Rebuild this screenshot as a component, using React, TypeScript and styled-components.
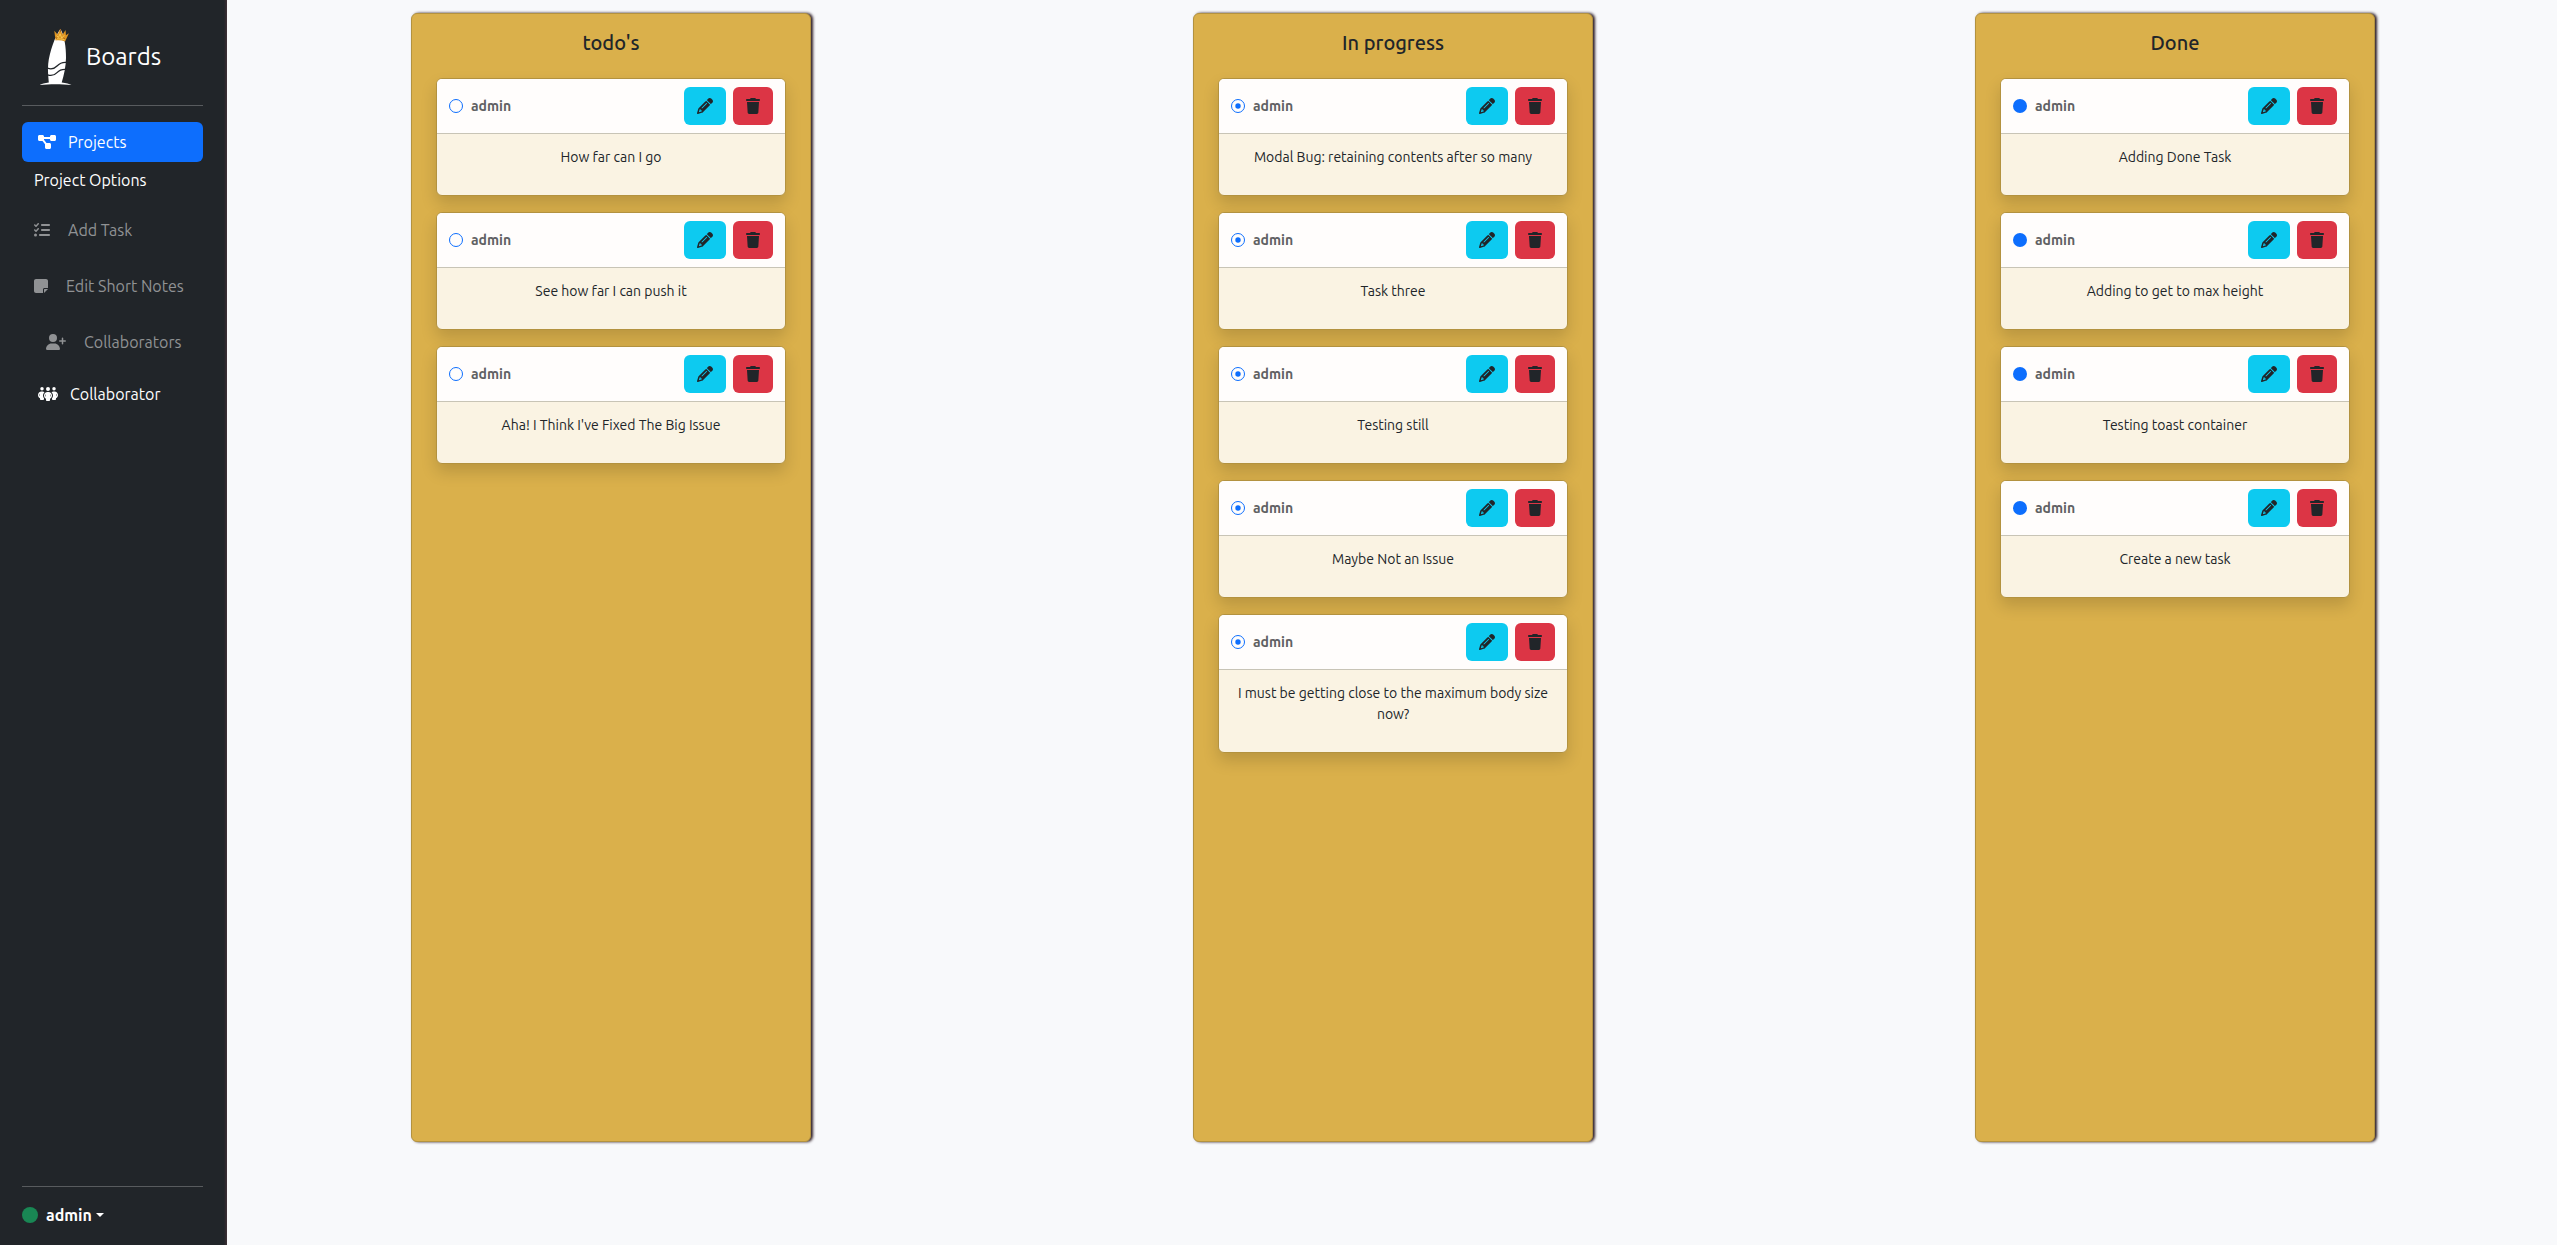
import React from "react";
import styled, { createGlobalStyle } from "styled-components";
import {
  FaDiagramProject,
  FaListCheck,
  FaNoteSticky,
  FaPencil,
  FaPeopleGroup,
  FaTrash,
  FaUserPlus,
} from "react-icons/fa6";

type Status = "todo" | "progress" | "done";

interface Column {
  title: string;
  status: Status;
  tasks: string[];
}

const columns: Column[] = [
  {
    title: "todo's",
    status: "todo",
    tasks: ["How far can I go", "See how far I can push it", "Aha! I Think I've Fixed The Big Issue"],
  },
  {
    title: "In progress",
    status: "progress",
    tasks: [
      "Modal Bug: retaining contents after so many",
      "Task three",
      "Testing still",
      "Maybe Not an Issue",
      "I must be getting close to the maximum body size now?",
    ],
  },
  {
    title: "Done",
    status: "done",
    tasks: ["Adding Done Task", "Adding to get to max height", "Testing toast container", "Create a new task"],
  },
];

const GlobalStyle = createGlobalStyle`
  *, *::before, *::after { box-sizing: border-box; }
  body {
    margin: 0;
    background: #f8f9fb;
    color: #212529;
    font-family: Ubuntu, Roboto, "Liberation Sans", sans-serif;
    font-size: 16px;
    line-height: 24px;
  }
  button { font: inherit; cursor: pointer; }
`;

const Layout = styled.div`
  display: flex;
  min-height: 100vh;
  overflow: hidden;
  background: #f8f9fb;
`;

const Sidebar = styled.aside`
  display: flex;
  flex-direction: column;
  flex: 0 0 227px;
  padding: 28px 24px 18px 22px;
  background: #212529;
  color: #fff;
  box-shadow: inset -3px 0 3px -2px #4a353b;
`;

const Brand = styled.a`
  display: flex;
  align-items: center;
  gap: 14px;
  padding-left: 17px;
  color: #fff;
  font-size: 24px;
  line-height: 36px;
  text-decoration: none;
`;

const Logo = styled.svg`
  width: 33px;
  height: 58px;
`;

const Divider = styled.hr<{ $top?: number }>`
  width: 100%;
  height: 1px;
  margin: ${(p) => p.$top ?? 0}px 0 16px;
  border: 0;
  background: #585b5e;
`;

const Nav = styled.nav`
  display: flex;
  flex: 1;
  flex-direction: column;
`;

const NavButton = styled.button<{ $active?: boolean; $indent?: number; $gap?: number; $icon: number }>`
  display: flex;
  align-items: center;
  gap: ${(p) => p.$gap ?? 18}px;
  height: 40px;
  padding: 0 0 0 ${(p) => p.$indent ?? 12}px;
  border: 0;
  border-radius: 6px;
  background: ${(p) => (p.$active ? "#0d6efd" : "transparent")};
  color: #fff;
  text-align: left;
  white-space: nowrap;

  &:disabled { color: #909294; }
  svg { flex: none; width: ${(p) => p.$icon}px; height: 16px; }
`;

const NavHeading = styled.div`
  margin: 6px 0 18px;
  padding-left: 12px;
`;

const NavGroup = styled.div`
  display: flex;
  flex-direction: column;
  gap: 16px;
  margin-bottom: 12px;
`;

const UserMenu = styled.button`
  display: flex;
  align-items: center;
  gap: 8px;
  padding: 0;
  border: 0;
  background: none;
  color: #fff;
  font-weight: 500;
`;

const Presence = styled.span`
  width: 16px;
  height: 16px;
  border-radius: 50%;
  background: #198754;
`;

const UserName = styled.span`
  display: flex;
  align-items: center;
  gap: 4px;
  font-weight: 700;

  &::after {
    content: "";
    border: 4px solid transparent;
    border-top-color: #fff;
    border-bottom: 0;
  }
`;

const Board = styled.main`
  display: grid;
  flex: 1;
  grid-template-columns: repeat(3, minmax(0, 1fr));
  justify-items: center;
  align-items: start;
  margin: 0 -9px 0 -7px;
  padding: 13px 0;
`;

const ColumnPanel = styled.section`
  width: 100%;
  max-width: 400px;
  min-height: calc(100vh - 116px);
  padding: 16px 24px;
  border: 1px solid #b3923f;
  border-radius: 6px;
  background: #dab04b;
  box-shadow: 2px 0 3px #2c1b22;
`;

const ColumnTitle = styled.h2`
  margin: 0 0 22px;
  font-size: 20px;
  font-weight: 500;
  line-height: 26px;
  text-align: center;
`;

const CardList = styled.div`
  display: flex;
  flex-direction: column;
  gap: 16px;
`;

const Card = styled.article`
  border: 1px solid #b3923f;
  border-radius: 6px;
  background: #faf3e3;
  box-shadow: 0 8px 16px rgba(0, 0, 0, 0.15);
`;

const CardHeader = styled.header`
  display: flex;
  align-items: center;
  gap: 7px;
  padding: 8px 12px;
  border-bottom: 1px solid #c8c4b6;
  border-radius: 5px 5px 0 0;
  background: #fffdfc;
`;

const Owner = styled.span`
  display: flex;
  flex: 1;
  align-items: center;
  gap: 8px;
  color: #5f6163;
  font-size: 14px;
  font-weight: 700;
  line-height: 21px;
`;

const StatusIcon = styled.svg`
  width: 14px;
  height: 14px;
  color: #0d6efd;
`;

const IconButton = styled.button<{ $tone: string; $icon: number }>`
  display: flex;
  align-items: center;
  height: 38px;
  padding: 0 13px;
  border: 0;
  border-radius: 6px;
  background: ${(p) => p.$tone};
  color: #212529;

  svg { width: ${(p) => p.$icon}px; height: 16px; }
`;

const CardText = styled.p`
  margin: 0;
  padding: 13px 12px 27px;
  font-size: 14px;
  line-height: 21px;
  text-align: center;
`;

function SurfboardLogo() {
  return (
    <Logo viewBox="0 0 33 58" aria-hidden="true">
      <path
        d="M21.500 1C16 8 10.500 24 9.200 36c-.7 7 .2 13 .6 18.400C6 54.900 2.500 55.900.500 57c10-1.100 22-1.100 32 0-2-1.100-5.500-2.100-9.800-2.600C25 47 26.800 39 27 30c.1-11-1.600-22-5.500-29z"
        fill="#fff"
      />
      <path
        d="M8.500 40.200c3.500 1.300 7 .4 9.500-2.200s5.500-4 9.500-3.600M8.500 46.800c3.500 1.300 7 .4 9.500-2.200s5.500-3.500 9-3.200"
        fill="none"
        stroke="#212529"
        strokeWidth="1.300"
      />
      <path d="M15.300 2.800l3.300 3.600L21.200.900l2.400 5.700 3-4.600.3 5.200 3-1.900-3.800 8.200c-3-1.300-6.400-1.700-9.600-1.100z" fill="#dc9322" />
      <path d="M17.400 7.500l2 2 1.700-3.800 1.600 4.500 2.500-2.900M17 11c3-.4 6-.1 8.700 1" fill="none" stroke="#f8cd58" strokeWidth=".9" />
      <path d="M21.200.9l.5 3M16.500 9.500l1.500 1M24.500 10l1.200.6" fill="none" stroke="#8c4c0c" strokeWidth=".8" />
    </Logo>
  );
}

function StatusMark({ status }: { status: Status }) {
  return (
    <StatusIcon viewBox="0 0 14 14" aria-hidden="true">
      {status === "done" ? (
        <circle cx="7" cy="7" r="7" fill="currentColor" />
      ) : (
        <circle cx="7" cy="7" r="6.500" fill="none" stroke="currentColor" />
      )}
      {status === "progress" && <circle cx="7" cy="7" r="2.700" fill="currentColor" />}
    </StatusIcon>
  );
}

function TaskCard({ text, status }: { text: string; status: Status }) {
  return (
    <Card>
      <CardHeader>
        <Owner>
          <StatusMark status={status} />
          admin
        </Owner>
        <IconButton type="button" $tone="#0dcaf0" $icon={16} aria-label="Edit task">
          <FaPencil />
        </IconButton>
        <IconButton type="button" $tone="#dc3545" $icon={14} aria-label="Delete task">
          <FaTrash />
        </IconButton>
      </CardHeader>
      <CardText>{text}</CardText>
    </Card>
  );
}

export default function App() {
  return (
    <>
      <GlobalStyle />
      <Layout>
        <Sidebar>
          <Brand href="#">
            <SurfboardLogo />
            Boards
          </Brand>
          <Divider $top={19} />
          <Nav>
            <NavButton type="button" $active $indent={16} $gap={12} $icon={18}>
              <FaDiagramProject />
              Projects
            </NavButton>
            <NavHeading>Project Options</NavHeading>
            <NavGroup>
              <NavButton type="button" disabled $icon={16}>
                <FaListCheck />
                Add Task
              </NavButton>
              <NavButton type="button" disabled $icon={14}>
                <FaNoteSticky />
                Edit Short Notes
              </NavButton>
              <NavButton type="button" disabled $indent={24} $icon={20}>
                <FaUserPlus />
                Collaborators
              </NavButton>
            </NavGroup>
            <NavButton type="button" $indent={16} $gap={12} $icon={20}>
              <FaPeopleGroup />
              Collaborator
            </NavButton>
          </Nav>
          <Divider />
          <UserMenu type="button">
            <Presence />
            <UserName>admin</UserName>
          </UserMenu>
        </Sidebar>
        <Board>
          {columns.map((column) => (
            <ColumnPanel key={column.title}>
              <ColumnTitle>{column.title}</ColumnTitle>
              <CardList>
                {column.tasks.map((task) => (
                  <TaskCard key={task} text={task} status={column.status} />
                ))}
              </CardList>
            </ColumnPanel>
          ))}
        </Board>
      </Layout>
    </>
  );
}
